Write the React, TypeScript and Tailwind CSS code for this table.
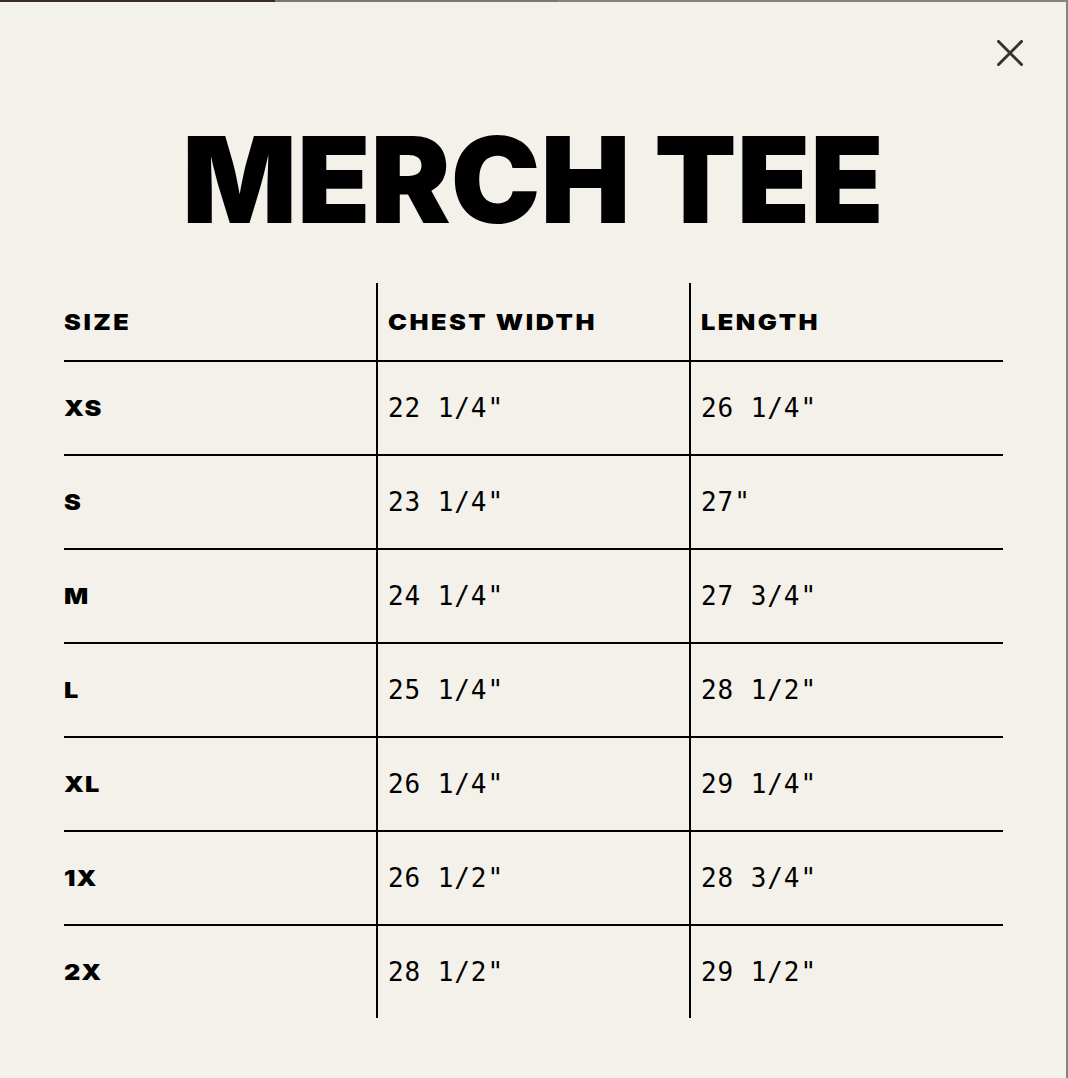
import React from "react";

const rows: [string, string, string][] = [
  ["XS", '22 1/4"', '26 1/4"'],
  ["S", '23 1/4"', '27"'],
  ["M", '24 1/4"', '27 3/4"'],
  ["L", '25 1/4"', '28 1/2"'],
  ["XL", '26 1/4"', '29 1/4"'],
  ["1X", '26 1/2"', '28 3/4"'],
  ["2X", '28 1/2"', '29 1/2"'],
];

const heavy =
  "inline-block origin-left scale-x-[1.15] font-['Inter',sans-serif] font-black uppercase text-black text-[22px] leading-none";
const mono =
  "font-['DejaVu_Sans_Mono','Liberation_Mono',monospace] text-[26px] tracking-[0.035em] text-black";

function CloseIcon() {
  return (
    <svg width="26" height="26" viewBox="0 0 26 26" fill="none">
      <path d="M1.5 1.5 L24.5 24.5 M24.5 1.5 L1.5 24.5" stroke="#333333" strokeWidth="3" strokeLinecap="square" />
    </svg>
  );
}

export default function App() {
  return (
    <div className="w-[1068px] h-[1078px] bg-[#838383] flex flex-col overflow-hidden">
      <div className="h-[2px] flex shrink-0">
        <div className="w-[275px] bg-[#3b2b26]" />
        <div className="w-[283px] bg-[#7d776b]" />
        <div className="flex-1 bg-[#838383]" />
      </div>
      <div className="flex-1 flex">
        <div className="relative w-[1066px] bg-[#f4f1ea] flex flex-col items-center">
          <button className="absolute right-[43px] top-[38px] w-[26px] h-[26px] flex items-center justify-center">
            <CloseIcon />
          </button>
          <h1 className="mt-[118px] text-center leading-none font-['Inter',sans-serif] font-black text-[120px] text-black">
            MERCH TEE
          </h1>
          <div className="mt-[43px] w-[939px] self-start ml-[64px] grid grid-cols-[312px_313px_1fr]">
            <div className="h-[79px] flex items-center border-b-2 border-black">
              <span className={`${heavy} tracking-[0.1em]`}>Size</span>
            </div>
            <div className="h-[79px] flex items-center border-b-2 border-l-2 border-black pl-[10px]">
              <span className={`${heavy} tracking-[0.1em]`}>Chest Width</span>
            </div>
            <div className="h-[79px] flex items-center border-b-2 border-l-2 border-black pl-[10px]">
              <span className={`${heavy} tracking-[0.1em]`}>Length</span>
            </div>
            {rows.map((r, i) => {
              const last = i === rows.length - 1;
              const b = last ? "h-[92px]" : "h-[94px] border-b-2";
              return (
                <React.Fragment key={r[0]}>
                  <div className={`flex items-center border-black ${b}`}>
                    <span className={`${heavy} tracking-[0.04em]`}>{r[0]}</span>
                  </div>
                  <div className={`flex items-center border-black border-l-2 pl-[10px] ${b}`}>
                    <span className={mono}>{r[1]}</span>
                  </div>
                  <div className={`flex items-center border-black border-l-2 pl-[10px] ${b}`}>
                    <span className={mono}>{r[2]}</span>
                  </div>
                </React.Fragment>
              );
            })}
          </div>
        </div>
        <div className="flex-1 bg-[#838383]" />
      </div>
    </div>
  );
}
